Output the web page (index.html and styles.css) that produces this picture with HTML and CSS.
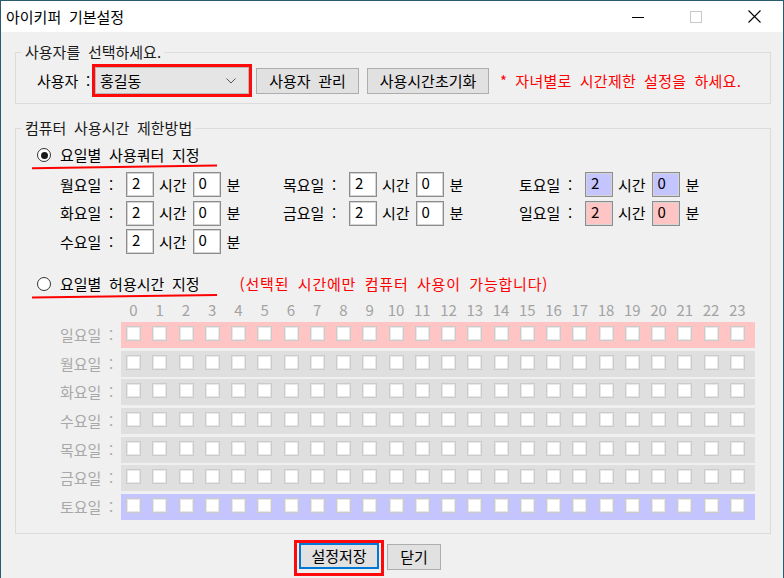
FILE: index.html
```html
<!DOCTYPE html>
<html lang="ko">
<head>
<meta charset="utf-8">
<title>아이키퍼 기본설정</title>
<link rel="stylesheet" href="styles.css">
</head>
<body>
<div class="window">
  <div class="titlebar">
    <div class="title">아이키퍼 기본설정</div>
    <div class="caption-buttons">
      <div class="cap"><svg width="12" height="12" viewBox="0 0 12 12"><path d="M0 6.5H12" stroke="#000" stroke-width="1"/></svg></div>
      <div class="cap"><svg width="12" height="12" viewBox="0 0 12 12"><rect x="0.5" y="0.5" width="11" height="11" fill="none" stroke="#c8c8c8" stroke-width="1"/></svg></div>
      <div class="cap"><svg width="13" height="13" viewBox="0 0 13 13"><path d="M0.5 0.5L12.5 12.5M12.5 0.5L0.5 12.5" stroke="#000" stroke-width="1.1"/></svg></div>
    </div>
  </div>
  <div class="client">
    <fieldset class="group group-user">
      <legend>사용자를 선택하세요.</legend>
      <div class="user-row">
        <span class="user-label">사용자 :</span>
        <div class="mark-red combo-mark">
          <div class="combo"><span class="combo-text">홍길동</span><svg class="chev" width="10" height="6" viewBox="0 0 10 6"><path d="M0.5 0.5L5 5L9.5 0.5" fill="none" stroke="#555" stroke-width="1"/></svg></div>
        </div>
        <button class="btn btn-manage">사용자 관리</button>
        <button class="btn btn-reset">사용시간초기화</button>
        <span class="note">* 자녀별로 시간제한 설정을 하세요.</span>
      </div>
    </fieldset>

    <fieldset class="group group-method">
      <legend>컴퓨터 사용시간 제한방법</legend>
      <div class="radio-row">
        <span class="radio checked"></span><span class="radio-label">요일별 사용쿼터 지정</span>
      </div>
      <svg class="underline" width="186" height="6" viewBox="0 0 186 6"><path d="M0 4.2 Q90 3.2 185 1.6" fill="none" stroke="#ff0000" stroke-width="2"/></svg>

      <div class="quota">
        <div class="qitem"><span class="qlabel">월요일 :</span><span class="tbox">2</span><span class="unit">시간</span><span class="tbox">0</span><span class="unit2">분</span></div>
        <div class="qitem"><span class="qlabel">목요일 :</span><span class="tbox">2</span><span class="unit">시간</span><span class="tbox">0</span><span class="unit2">분</span></div>
        <div class="qitem"><span class="qlabel">토요일 :</span><span class="tbox sat">2</span><span class="unit">시간</span><span class="tbox sat">0</span><span class="unit2">분</span></div>
        <div class="qitem"><span class="qlabel">화요일 :</span><span class="tbox">2</span><span class="unit">시간</span><span class="tbox">0</span><span class="unit2">분</span></div>
        <div class="qitem"><span class="qlabel">금요일 :</span><span class="tbox">2</span><span class="unit">시간</span><span class="tbox">0</span><span class="unit2">분</span></div>
        <div class="qitem"><span class="qlabel">일요일 :</span><span class="tbox sun">2</span><span class="unit">시간</span><span class="tbox sun">0</span><span class="unit2">분</span></div>
        <div class="qitem"><span class="qlabel">수요일 :</span><span class="tbox">2</span><span class="unit">시간</span><span class="tbox">0</span><span class="unit2">분</span></div>
      </div>

      <div class="radio-row radio-row2">
        <span class="radio"></span><span class="radio-label">요일별 허용시간 지정</span>
        <span class="note2">(선택된 시간에만 컴퓨터 사용이 가능합니다)</span>
      </div>
      <svg class="underline" width="186" height="6" viewBox="0 0 186 6"><path d="M0 4.4 Q90 3.6 185 2" fill="none" stroke="#ff0000" stroke-width="2"/></svg>

      <div class="hours">
        <span class="hours-spacer"></span>
        <div class="hours-nums">
          <span>0</span><span>1</span><span>2</span><span>3</span><span>4</span><span>5</span><span>6</span><span>7</span><span>8</span><span>9</span><span>10</span><span>11</span><span>12</span><span>13</span><span>14</span><span>15</span><span>16</span><span>17</span><span>18</span><span>19</span><span>20</span><span>21</span><span>22</span><span>23</span>
        </div>
      </div>

      <div class="schedule" id="schedule">
        <div class="srow"><span class="slabel">일요일 :</span><div class="cells sun"></div></div>
        <div class="srow"><span class="slabel">월요일 :</span><div class="cells"></div></div>
        <div class="srow"><span class="slabel">화요일 :</span><div class="cells"></div></div>
        <div class="srow"><span class="slabel">수요일 :</span><div class="cells"></div></div>
        <div class="srow"><span class="slabel">목요일 :</span><div class="cells"></div></div>
        <div class="srow"><span class="slabel">금요일 :</span><div class="cells"></div></div>
        <div class="srow"><span class="slabel">토요일 :</span><div class="cells sat"></div></div>
      </div>
    </fieldset>

    <div class="bottom-row">
      <div class="mark-red save-mark"><button class="btn btn-save">설정저장</button></div>
      <button class="btn btn-close">닫기</button>
    </div>
  </div>
</div>
<script>
  document.querySelectorAll('.cells').forEach(function (row) {
    for (var i = 0; i < 24; i++) {
      var c = document.createElement('span');
      c.className = 'cb';
      row.appendChild(c);
    }
  });
</script>
</body>
</html>
```

FILE: styles.css
```css
* { box-sizing: border-box; }
html, body { margin: 0; padding: 0; }
body {
  width: 784px;
  height: 578px;
  overflow: hidden;
  font-family: "Noto Sans CJK KR", "Noto Sans", sans-serif;
  font-size: 15px;
  word-spacing: 3.5px;
  color: #000;
  background: #2b5b6f;
}
.window {
  width: 784px;
  height: 578px;
  border: 1px solid #2b5b6f;
  border-bottom: 0;
  background: #f0f0f0;
  display: flex;
  flex-direction: column;
}
.titlebar {
  flex: none;
  height: 31px;
  background: #fff;
  display: flex;
  align-items: center;
}
.title {
  flex: 1;
  padding-left: 5px;
  font-size: 15px;
  line-height: 20px;
  color: #000;
}
.caption-buttons { display: flex; height: 100%; }
.cap {
  width: 58px;
  display: flex;
  align-items: center;
  justify-content: center;
}
.cap svg { display: block; }

.client {
  flex: 1;
  padding: 0 12px 0 14px;
}

fieldset.group {
  border: 1px solid #dcdcdc;
  margin: 0;
  padding: 0;
  min-width: 0;
}
fieldset.group legend {
  margin-left: 6px;
  padding: 0 3px;
  font-size: 15px;
  line-height: 16px;
  color: #1a1a1a;
}
.group-user { margin-top: 12px !important; padding: 4px 0 6px 0 !important; }
.user-row {
  display: flex;
  align-items: center;
  height: 33px;
  padding-left: 21px;
}
.user-label { width: 55px; line-height: 18px; white-space: nowrap; }
.mark-red { border: 3px solid #ff0a0a; }
.combo-mark { width: 160px; height: 33px; }
.combo {
  height: 100%;
  background: #e5e5e5;
  border: 1px solid #b9b9b9;
  display: flex;
  align-items: center;
  padding: 0 12px 0 4px;
}
.combo-text { flex: 1; line-height: 18px; }
.chev { display: block; }

.btn {
  font-family: inherit;
  font-size: 15px;
  word-spacing: 3.5px;
  color: #000;
  background: #e1e1e1;
  border: 1px solid #adadad;
  height: 26px;
  padding: 0;
  margin: 0;
  line-height: 18px;
  display: flex;
  align-items: center;
  justify-content: center;
}
.btn-manage { width: 103px; margin-left: 4px; }
.btn-reset { width: 122px; margin-left: 8px; }
.note { margin-left: 11px; color: #ff0000; line-height: 18px; white-space: nowrap; letter-spacing: 0.3px; }

.group-method { margin-top: 16px !important; padding: 0 0 13px 0 !important; }
.radio-row {
  display: flex;
  align-items: center;
  height: 18px;
  margin-top: 10px;
  padding-left: 21px;
}
.radio-row2 { margin-top: 21px; }
.radio {
  width: 14px;
  height: 14px;
  border-radius: 50%;
  border: 1px solid #333;
  background: #fff;
  display: flex;
  align-items: center;
  justify-content: center;
  flex: none;
}
.radio.checked::after {
  content: "";
  width: 7px;
  height: 7px;
  border-radius: 50%;
  background: #1a1a1a;
}
.radio-label { margin-left: 9px; line-height: 18px; white-space: nowrap; }
.note2 { margin-left: 40px; color: #ff0000; line-height: 18px; white-space: nowrap; letter-spacing: 0.8px; }
.underline { display: block; margin-left: 16px; }

.quota {
  display: grid;
  grid-template-columns: 223px 236px auto;
  grid-template-rows: repeat(3, 25px);
  row-gap: 3.5px;
  margin-top: 2px;
  padding-left: 44px;
}
.qitem { display: flex; align-items: center; height: 25px; }
.qlabel { width: 66px; line-height: 18px; white-space: nowrap; }
.tbox {
  width: 28px;
  height: 25px;
  border: 1px solid #8c8c8c;
  box-shadow: inset 0 0 0 1px #d4d4d4;
  background: #fff;
  padding: 0 0 0 5px;
  line-height: 19px;
  font-size: 15px;
}
.tbox.sat { background: #c4c4ff; }
.tbox.sun { background: #ffc4c4; }
.unit { margin: 0 6px 0 5px; line-height: 18px; }
.unit2 { margin-left: 6px; line-height: 18px; }

.hours {
  display: flex;
  margin-top: 3px;
  padding-left: 44px;
  height: 16px;
}
.hours-spacer { width: 61px; flex: none; }
.hours-nums {
  display: flex;
  gap: 11.25px;
  padding-left: 5px;
}
.hours-nums span {
  width: 15px;
  display: flex;
  justify-content: center;
  color: #a3a3a3;
  font-size: 15px;
  line-height: 16px;
  white-space: nowrap;
}

.schedule {
  margin-top: 4px;
  padding-left: 44px;
  display: flex;
  flex-direction: column;
  gap: 2.667px;
}
.srow { display: flex; align-items: center; height: 26px; }
.slabel { width: 61px; color: #a8a8a8; line-height: 18px; flex: none; white-space: nowrap; }
.cells {
  width: 634px;
  height: 26px;
  background: #dfdfdf;
  display: flex;
  gap: 11.25px;
  padding: 4px 0 0 5px;
}
.cells.sun { background: #ffc4c4; }
.cells.sat { background: #c4c4ff; }
.cb {
  width: 15px;
  height: 15px;
  flex: none;
  background: #fff;
  border: 1px solid #cbcbcb;
  box-shadow: inset 0 0 0 1px #e8e8e8;
}

.bottom-row {
  display: flex;
  align-items: flex-start;
  margin-top: 6px;
  padding-left: 279px;
}
.save-mark { padding: 0 2px 4px 2px; }
.btn-save {
  width: 80px;
  border: 2px solid #0078d7;
}
.btn-close { width: 54px; margin: 4px 0 0 3px; }
```
